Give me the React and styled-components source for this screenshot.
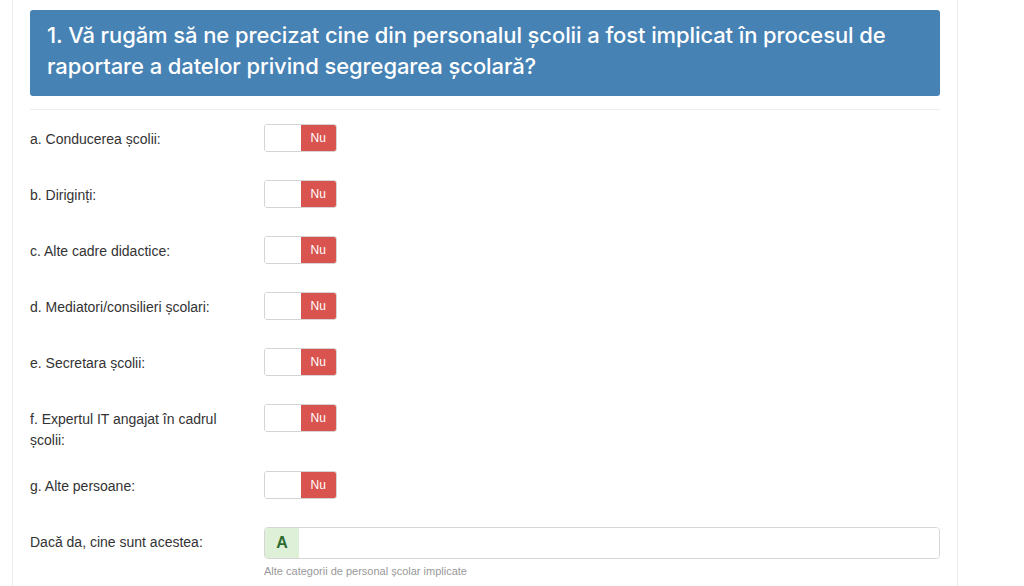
import React from 'react';
import styled, { createGlobalStyle } from 'styled-components';

const GlobalStyle = createGlobalStyle`
    body {
        margin: 0;
        background: #fff;
        font-family: "Liberation Sans", Arial, sans-serif;
        color: #333;
    }
`;

const Page = styled.div`
    padding-left: 12px;
    width: 946px;
`;

const Card = styled.div`
    background: #fff;
    border: 1px solid #ececec;
    border-top: none;
    padding: 10px 17px 40px;
`;

const QuestionHeader = styled.h2`
    margin: 0;
    background: #4682b4;
    border-radius: 3px;
    color: #fff;
    font-family: Inter, "Liberation Sans", sans-serif;
    font-weight: 500;
    font-size: 22px;
    line-height: 31px;
    padding: 10px 17px 14px;
    letter-spacing: -0.1px;
`;

const Divider = styled.hr`
    border: none;
    border-top: 1px solid #eee;
    margin: 13px 0 14px;
`;

const FieldRow = styled.div`
    display: flex;
    align-items: flex-start;
    margin-bottom: 20px;
`;

const Label = styled.label`
    flex: 0 0 234px;
    box-sizing: border-box;
    padding: 5px 30px 0 0;
    font-size: 14px;
    line-height: 21px;
    color: #333;
`;

const Control = styled.div`
    flex: 1;
    min-height: 36px;
`;

const Toggle = styled.div`
    display: flex;
    width: 73px;
    height: 28px;
    box-sizing: border-box;
    border: 1px solid #d4d4d4;
    border-radius: 3px;
    overflow: hidden;
`;

const ToggleHalf = styled.span`
    flex: 1;
    display: flex;
    align-items: center;
    justify-content: center;
    background: ${(p) => (p.$active ? '#d9534f' : '#fff')};
    color: #fff;
    font-size: 12px;
`;

const InputGroup = styled.div`
    display: flex;
    height: 32px;
    box-sizing: border-box;
    border: 1px solid #d6d6d6;
    border-radius: 4px;
    overflow: hidden;
`;

const Addon = styled.span`
    flex: 0 0 34px;
    display: flex;
    align-items: center;
    justify-content: center;
    background: #dff0d8;
    color: #2e6b32;
    font-weight: bold;
    font-size: 16px;
`;

const TextInput = styled.input`
    flex: 1;
    border: none;
    outline: none;
    padding: 0 10px;
    font-size: 13px;
`;

const HelpText = styled.div`
    margin-top: 6px;
    font-size: 11px;
    color: #999;
`;

const items = [
    'a. Conducerea școlii:',
    'b. Diriginți:',
    'c. Alte cadre didactice:',
    'd. Mediatori/consilieri școlari:',
    'e. Secretara școlii:',
    'f. Expertul IT angajat în cadrul școlii:',
    'g. Alte persoane:',
];

const App = () => (
    <Page>
        <GlobalStyle />
        <Card>
            <QuestionHeader>
                1. Vă rugăm să ne precizat cine din personalul școlii a fost implicat în procesul de
                raportare a datelor privind segregarea școlară?
            </QuestionHeader>
            <Divider />
            {items.map((label) => (
                <FieldRow key={label}>
                    <Label>{label}</Label>
                    <Control>
                        <Toggle>
                            <ToggleHalf />
                            <ToggleHalf $active>Nu</ToggleHalf>
                        </Toggle>
                    </Control>
                </FieldRow>
            ))}
            <FieldRow>
                <Label>Dacă da, cine sunt acestea:</Label>
                <Control>
                    <InputGroup>
                        <Addon>A</Addon>
                        <TextInput type="text" />
                    </InputGroup>
                    <HelpText>Alte categorii de personal școlar implicate</HelpText>
                </Control>
            </FieldRow>
        </Card>
    </Page>
);

export default App;
